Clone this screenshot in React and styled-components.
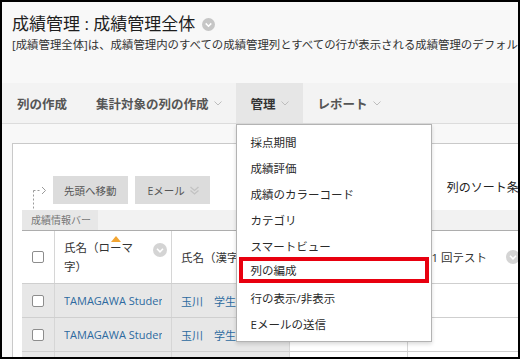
import React from "react";
import styled, { createGlobalStyle } from "styled-components";

const NAV_ITEMS = [
  { label: "列の作成", menu: false },
  { label: "集計対象の列の作成", menu: true },
  { label: "管理", menu: true, active: true },
  { label: "レポート", menu: true },
];

const MENU_ITEMS = [
  "採点期間",
  "成績評価",
  "成績のカラーコード",
  "カテゴリ",
  "スマートビュー",
  "列の編成",
  "行の表示/非表示",
  "Eメールの送信",
];

const ROWS = [
  { roman: "TAMAGAWA Student01", kanji: "玉川　学生01" },
  { roman: "TAMAGAWA Student02", kanji: "玉川　学生02" },
  { roman: "TAMAGAWA Student03", kanji: "玉川　学生03" },
];

function Chevron() {
  return (
    <svg width="8" height="5" viewBox="0 0 8 5">
      <polyline points="0.5,0.5 4,4 7.5,0.5" fill="none" stroke="#bdbdbd" strokeWidth="1" />
    </svg>
  );
}

function DoubleChevron() {
  return (
    <svg width="9" height="9" viewBox="0 0 9 9">
      <polyline points="0.5,1 4.5,4.5 8.5,1" fill="none" stroke="#c2c2c2" strokeWidth="1.3" />
      <polyline points="0.5,4.5 4.5,8 8.5,4.5" fill="none" stroke="#c2c2c2" strokeWidth="1.3" />
    </svg>
  );
}

function CircleChevron({ size = 14, color = "#d4d4d4" }) {
  return (
    <svg width={size} height={size} viewBox="0 0 14 14">
      <circle cx="7" cy="7" r="7" fill={color} />
      <polyline points="4,5.8 7,8.8 10,5.8" fill="none" stroke="#fff" strokeWidth="1.6" />
    </svg>
  );
}

export default function App() {
  return (
    <>
      <GlobalStyle />
      <Frame>
        <Header>
          <Title>
            成績管理 : 成績管理全体
            <CircleChevron size={13} color="#c6c6c6" />
          </Title>
          <Description>
            <em>[成績管理全体]</em>は、成績管理内のすべての成績管理列とすべての行が表示される成績管理のデフォルトビューです。
          </Description>
        </Header>

        <Nav>
          {NAV_ITEMS.map((item) => (
            <NavItem key={item.label} $active={item.active}>
              {item.label}
              {item.menu && <Chevron />}
              {item.active && (
                <Menu>
                  {MENU_ITEMS.map((menuItem) => (
                    <MenuItem key={menuItem} $marked={menuItem === "列の編成"}>
                      {menuItem}
                    </MenuItem>
                  ))}
                </Menu>
              )}
            </NavItem>
          ))}
        </Nav>

        <Panel>
          <Toolbar>
            <Connector width="31" height="24" viewBox="0 0 31 24">
              <line x1="11.5" y1="4.5" x2="11.5" y2="24" stroke="#9a9a9a" strokeDasharray="2,2" />
              <line x1="11.5" y1="4.5" x2="19" y2="4.5" stroke="#9a9a9a" strokeDasharray="2,2" />
              <polyline points="20,1 23.5,4.5 20,8" fill="none" stroke="#9a9a9a" strokeWidth="1" />
            </Connector>
            <ToolButton>先頭へ移動</ToolButton>
            <ToolButton $gap>
              Eメール
              <DoubleChevron />
            </ToolButton>
            <SortLabel>列のソート条件：レイアウトの位置</SortLabel>
          </Toolbar>

          <InfoBar>
            <InfoLabel>成績情報バー</InfoLabel>
          </InfoBar>

          <Table>
            <HeaderRow>
              <CheckCell>
                <Checkbox />
              </CheckCell>
              <HeadCell>
                <SortMark />
                <HeadLabel>氏名（ローマ字）</HeadLabel>
                <HeadIcon>
                  <CircleChevron />
                </HeadIcon>
              </HeadCell>
              <HeadCell>
                <HeadLabel $wide>氏名（漢字）</HeadLabel>
              </HeadCell>
              <HeadCell />
              <HeadCell>
                <HeadLabel $wide>第 1 回テスト</HeadLabel>
                <HeadIcon $center>
                  <CircleChevron />
                </HeadIcon>
              </HeadCell>
            </HeaderRow>

            {ROWS.map((row) => (
              <DataRow key={row.roman}>
                <CheckCell $frozen>
                  <Checkbox />
                </CheckCell>
                <Cell $frozen>
                  <LinkText>{row.roman}</LinkText>
                </Cell>
                <Cell $frozen>
                  <LinkText>{row.kanji}</LinkText>
                </Cell>
                <Cell />
                <Cell />
              </DataRow>
            ))}
          </Table>
        </Panel>
      </Frame>
    </>
  );
}

// =========================================================
// styled-components
// =========================================================

const GlobalStyle = createGlobalStyle`
  html, body {
    margin: 0;
    padding: 0;
    background: #ffffff;
  }

  body {
    font-family: "Open Sans", "Noto Sans CJK JP", sans-serif;
    overflow: hidden;
  }

  * {
    box-sizing: border-box;
  }
`;

const Frame = styled.div`
  display: flex;
  flex-direction: column;

  width: 520px;
  height: 359px;

  overflow: hidden;

  border: 2px solid #000000;

  background: #f8f8f8;
`;

const Header = styled.header`
  padding: 10px 0 0 10px;
`;

const Title = styled.h1`
  display: flex;
  align-items: center;
  gap: 7px;

  margin: 0;

  font-size: 17px;
  font-weight: 400;
  line-height: 24px;
  color: #1e1e1e;
  white-space: nowrap;
`;

const Description = styled.p`
  margin: 1px 0 0;

  font-size: 11.4px;
  line-height: 16px;
  color: #333333;
  white-space: nowrap;

  em {
    font-style: normal;
  }
`;

const Nav = styled.nav`
  display: flex;

  height: 41px;
  margin-top: 30px;

  border-bottom: 1px solid #dcdcdc;

  background: #f3f3f3;
`;

const NavItem = styled.div`
  position: relative;

  display: flex;
  flex-shrink: 0;
  align-items: center;
  gap: 5px;

  padding: 0 14px 0 15px;

  background: ${(p) => (p.$active ? "#e6e6e6" : "transparent")};

  font-size: 12.5px;
  font-weight: 700;
  color: ${(p) => (p.$active ? "#333333" : "#555555")};
  white-space: nowrap;
`;

const Menu = styled.div`
  position: absolute;
  top: calc(100% + 1px);
  left: 0;
  z-index: 10;

  width: 196px;
  padding: 4px 0;

  border: 1px solid #b3b3b3;

  background: #ffffff;

  box-shadow: 0 2px 4px rgba(0, 0, 0, 0.15);
`;

const MenuItem = styled.div`
  display: flex;
  align-items: center;

  height: 26px;
  margin: 0 2px;
  padding-left: 12px;

  font-size: 11.5px;
  font-weight: 400;
  color: #2a2a2a;

  box-shadow: ${(p) => (p.$marked ? "inset 0 0 0 4px #e8000f" : "none")};
  transform: ${(p) => (p.$marked ? "translateY(-2px)" : "none")};
`;

const Panel = styled.section`
  flex: 1;

  width: 560px;
  margin: 19px 0 0 10px;
  padding-left: 9px;

  overflow: hidden;

  border: 1px solid #c9c9c9;
  border-bottom: none;

  background: #ffffff;
`;

const Toolbar = styled.div`
  display: flex;
  align-items: flex-end;

  height: 66px;
  padding-bottom: 6px;

  & > * {
    flex-shrink: 0;
  }
`;

const Connector = styled.svg`
  display: block;

  margin-bottom: -6px;
`;

const ToolButton = styled.div`
  display: flex;
  align-items: center;
  gap: 5px;

  height: 28px;
  margin-left: ${(p) => (p.$gap ? "7px" : "0")};
  padding: 0 11px 0 ${(p) => (p.$gap ? "13px" : "11px")};

  background: #dcdcdc;

  font-size: 10.5px;
  color: #555555;
  white-space: nowrap;
`;

const SortLabel = styled.div`
  margin: 0 0 8px 237px;

  font-size: 12px;
  line-height: 16px;
  color: #222222;
  white-space: nowrap;
`;

const InfoBar = styled.div`
  display: flex;

  height: 20px;

  background: #f2f2f2;
`;

const InfoLabel = styled.div`
  padding: 0 7px 0 9px;

  background: #e7e7e7;

  font-size: 10px;
  line-height: 20px;
  color: #777777;
`;

const Table = styled.div`
  border-top: 1px solid #adadad;
`;

const HeaderRow = styled.div`
  display: grid;
  grid-template-columns: 33px 117px 118px 118px 118px;

  height: 53px;

  border-bottom: 1px solid #cfcfcf;
`;

const DataRow = styled(HeaderRow)`
  height: 34px;
`;

const Cell = styled.div`
  display: flex;
  align-items: center;

  min-width: 0;
  padding: 0 9px;

  border-right: 1px solid #d6d6d6;

  background: ${(p) => (p.$frozen ? "#e7e7e7" : "#ffffff")};
`;

const CheckCell = styled(Cell)`
  justify-content: center;

  padding: 0;
`;

const HeadCell = styled(Cell)`
  position: relative;

  justify-content: space-between;

  padding: 0 4px 0 9px;
`;

const HeadLabel = styled.span`
  max-width: ${(p) => (p.$wide ? "none" : "72px")};

  font-size: 11.5px;
  line-height: 19px;
  color: #333333;
  white-space: ${(p) => (p.$wide ? "nowrap" : "normal")};
`;

const HeadIcon = styled.span`
  display: flex;

  margin-bottom: ${(p) => (p.$center ? "0" : "14px")};
  margin-right: ${(p) => (p.$center ? "1px" : "0")};
`;

const SortMark = styled.span`
  position: absolute;
  top: 5px;
  left: 56px;

  width: 0;
  height: 0;

  border-left: 5px solid transparent;
  border-right: 5px solid transparent;
  border-bottom: 6px solid #f3a531;
`;

const Checkbox = styled.span`
  display: block;

  width: 12px;
  height: 12px;

  border: 1px solid #8d8d8d;
  border-radius: 2px;

  background: #ffffff;
`;

const LinkText = styled.span`
  overflow: hidden;

  font-size: 11px;
  color: #2d6a9f;
  white-space: nowrap;
`;
